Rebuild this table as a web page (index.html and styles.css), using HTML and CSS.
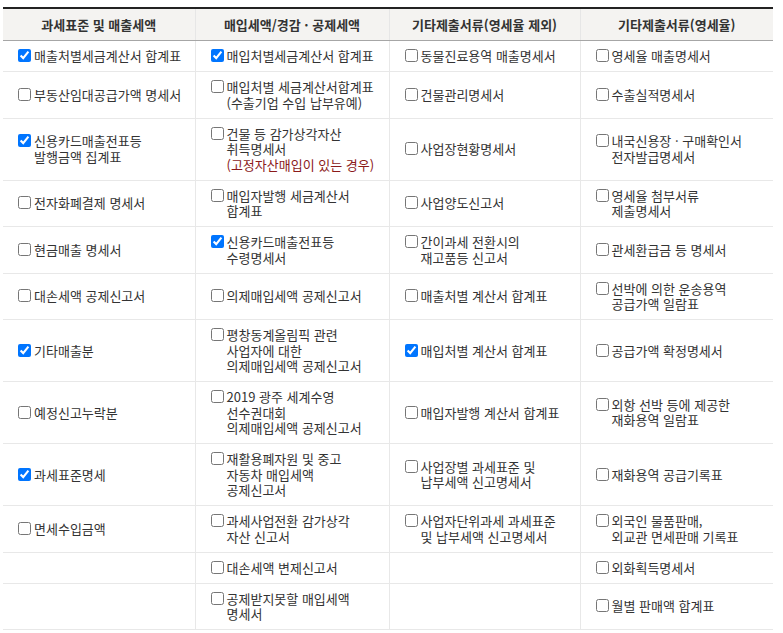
FILE: index.html
```html
<!DOCTYPE html>
<html lang="ko">
<head>
<meta charset="utf-8">
<title>부가세 첨부서류</title>
<link rel="stylesheet" href="styles.css">
</head>
<body>
<div class="wrap">
<table class="docs">
<colgroup><col class="c1"><col class="c2"><col class="c3"><col class="c4"></colgroup>
<thead>
<tr>
<th>과세표준 및 매출세액</th>
<th>매입세액/경감 · 공제세액</th>
<th>기타제출서류(영세율 제외)</th>
<th>기타제출서류(영세율)</th>
</tr>
</thead>
<tbody>
<tr>
<td><label class="item"><input type="checkbox" checked><span>매출처별세금계산서 합계표</span></label></td>
<td><label class="item"><input type="checkbox" checked><span>매입처별세금계산서 합계표</span></label></td>
<td><label class="item"><input type="checkbox"><span>동물진료용역 매출명세서</span></label></td>
<td><label class="item"><input type="checkbox"><span>영세율 매출명세서</span></label></td>
</tr>
<tr>
<td><label class="item"><input type="checkbox"><span>부동산임대공급가액 명세서</span></label></td>
<td><label class="item"><input type="checkbox"><span>매입처별 세금계산서합계표<br>(수출기업 수입 납부유예)</span></label></td>
<td><label class="item"><input type="checkbox"><span>건물관리명세서</span></label></td>
<td><label class="item"><input type="checkbox"><span>수출실적명세서</span></label></td>
</tr>
<tr>
<td><label class="item"><input type="checkbox" checked><span>신용카드매출전표등<br>발행금액 집계표</span></label></td>
<td><label class="item"><input type="checkbox"><span>건물 등 감가상각자산<br>취득명세서<br><em class="warn">(고정자산매입이 있는 경우)</em></span></label></td>
<td><label class="item"><input type="checkbox"><span>사업장현황명세서</span></label></td>
<td><label class="item"><input type="checkbox"><span>내국신용장 · 구매확인서<br>전자발급명세서</span></label></td>
</tr>
<tr>
<td><label class="item"><input type="checkbox"><span>전자화폐결제 명세서</span></label></td>
<td><label class="item"><input type="checkbox"><span>매입자발행 세금계산서<br>합계표</span></label></td>
<td><label class="item"><input type="checkbox"><span>사업양도신고서</span></label></td>
<td><label class="item"><input type="checkbox"><span>영세율 첨부서류<br>제출명세서</span></label></td>
</tr>
<tr>
<td><label class="item"><input type="checkbox"><span>현금매출 명세서</span></label></td>
<td><label class="item"><input type="checkbox" checked><span>신용카드매출전표등<br>수령명세서</span></label></td>
<td><label class="item"><input type="checkbox"><span>간이과세 전환시의<br>재고품등 신고서</span></label></td>
<td><label class="item"><input type="checkbox"><span>관세환급금 등 명세서</span></label></td>
</tr>
<tr>
<td><label class="item"><input type="checkbox"><span>대손세액 공제신고서</span></label></td>
<td><label class="item"><input type="checkbox"><span>의제매입세액 공제신고서</span></label></td>
<td><label class="item"><input type="checkbox"><span>매출처별 계산서 합계표</span></label></td>
<td><label class="item"><input type="checkbox"><span>선박에 의한 운송용역<br>공급가액 일람표</span></label></td>
</tr>
<tr>
<td><label class="item"><input type="checkbox" checked><span>기타매출분</span></label></td>
<td><label class="item"><input type="checkbox"><span>평창동계올림픽 관련<br>사업자에 대한<br>의제매입세액 공제신고서</span></label></td>
<td><label class="item"><input type="checkbox" checked><span>매입처별 계산서 합계표</span></label></td>
<td><label class="item"><input type="checkbox"><span>공급가액 확정명세서</span></label></td>
</tr>
<tr>
<td><label class="item"><input type="checkbox"><span>예정신고누락분</span></label></td>
<td><label class="item"><input type="checkbox"><span>2019 광주 세계수영<br>선수권대회<br>의제매입세액 공제신고서</span></label></td>
<td><label class="item"><input type="checkbox"><span>매입자발행 계산서 합계표</span></label></td>
<td><label class="item"><input type="checkbox"><span>외항 선박 등에 제공한<br>재화용역 일람표</span></label></td>
</tr>
<tr>
<td><label class="item"><input type="checkbox" checked><span>과세표준명세</span></label></td>
<td><label class="item"><input type="checkbox"><span>재활용폐자원 및 중고<br>자동차 매입세액<br>공제신고서</span></label></td>
<td><label class="item"><input type="checkbox"><span>사업장별 과세표준 및<br>납부세액 신고명세서</span></label></td>
<td><label class="item"><input type="checkbox"><span>재화용역 공급기록표</span></label></td>
</tr>
<tr>
<td><label class="item"><input type="checkbox"><span>면세수입금액</span></label></td>
<td><label class="item"><input type="checkbox"><span>과세사업전환 감가상각<br>자산 신고서</span></label></td>
<td><label class="item"><input type="checkbox"><span>사업자단위과세 과세표준<br>및 납부세액 신고명세서</span></label></td>
<td><label class="item"><input type="checkbox"><span>외국인 물품판매,<br>외교관 면세판매 기록표</span></label></td>
</tr>
<tr>
<td></td>
<td><label class="item"><input type="checkbox"><span>대손세액 변제신고서</span></label></td>
<td></td>
<td><label class="item"><input type="checkbox"><span>외화획득명세서</span></label></td>
</tr>
<tr>
<td></td>
<td><label class="item"><input type="checkbox"><span>공제받지못할 매입세액<br>명세서</span></label></td>
<td></td>
<td><label class="item"><input type="checkbox"><span>월별 판매액 합계표</span></label></td>
</tr>
</tbody>
</table>
</div>
</body>
</html>
```
FILE: styles.css
```css
html, body {
  margin: 0;
  padding: 0;
  background: #ffffff;
}

body {
  font-family: "Noto Sans CJK KR", "Noto Sans", sans-serif;
  font-size: 13px;
  color: #333333;
}

.wrap {
  padding: 7px 10px 0 3px;
}

.docs {
  width: 770px;
  table-layout: fixed;
  border-collapse: collapse;
  border-top: 2px solid #222222;
}

.docs col.c1 { width: 192px; }
.docs col.c2 { width: 194px; }
.docs col.c3 { width: 191px; }
.docs col.c4 { width: 193px; }

.docs th {
  background: #f4f3f1;
  height: 31px;
  padding: 0;
  font-weight: bold;
  font-size: 13px;
  line-height: 16px;
  color: #333333;
  text-align: center;
  vertical-align: middle;
  border-bottom: 1px solid #a6a6a6;
  border-right: 1px solid #e6e6e6;
}

.docs td {
  padding: 7px 6px 7.5px 11px;
  line-height: 15.5px;
  vertical-align: middle;
  border-bottom: 1px solid #e8e8e8;
  border-right: 1px solid #e8e8e8;
  white-space: nowrap;
}

.docs th:last-child,
.docs td:last-child {
  border-right: none;
}

.item {
  display: flex;
  align-items: flex-start;
  cursor: pointer;
}

.item input {
  flex: none;
  width: 13px;
  height: 13px;
  margin: 1px 3px 0 4px;
}

.warn {
  font-style: normal;
  color: #8b1a1a;
}
```
